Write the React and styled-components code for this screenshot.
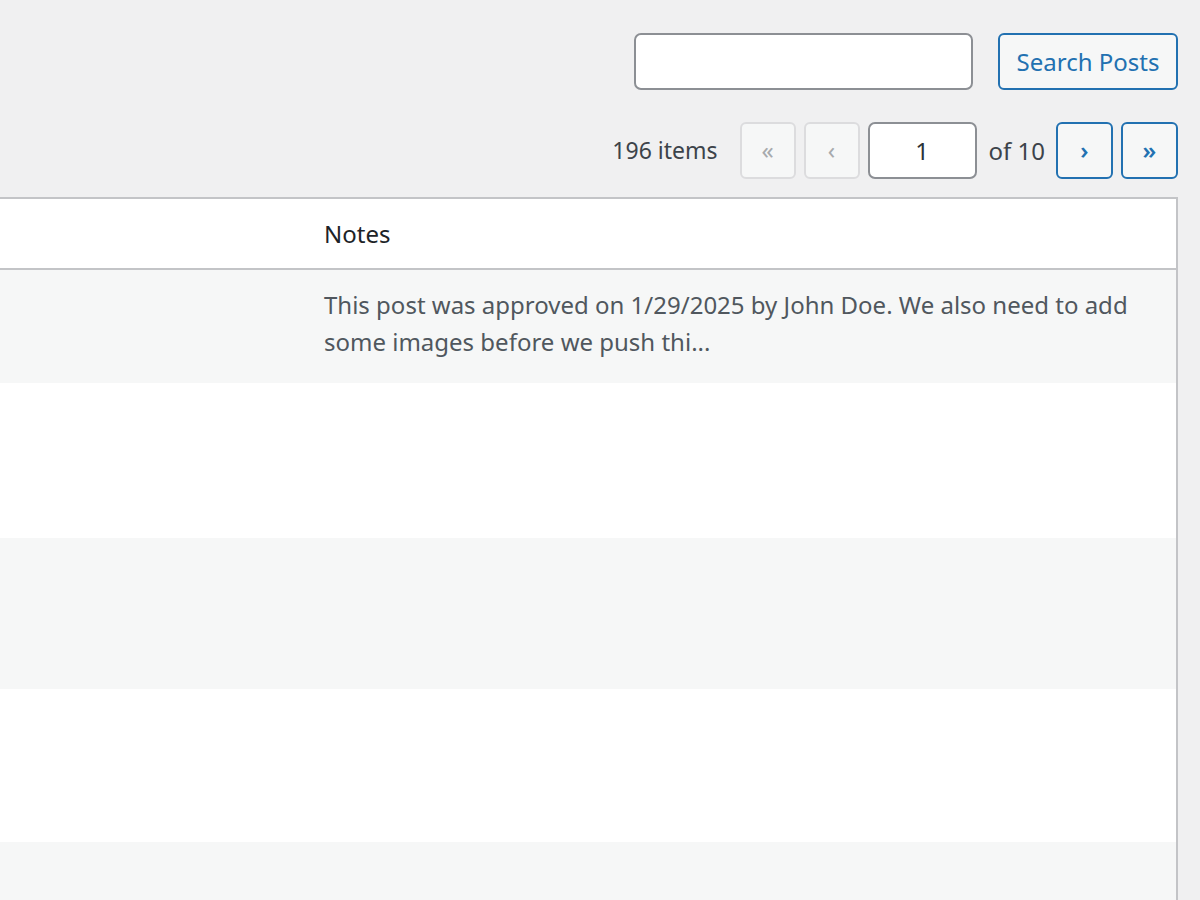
import React from "react";
import styled, { createGlobalStyle } from "styled-components";

const FONT = `"Noto Sans", "Open Sans", "Liberation Sans", sans-serif`;

const Global = createGlobalStyle`
  html, body { margin: 0; padding: 0; }
  body {
    background: #f0f0f1;
    font-family: ${FONT};
    color: #3c434a;
    overflow: hidden;
  }
  * { box-sizing: border-box; }
`;

const Page = styled.div`
  width: 1200px;
  height: 900px;
  padding: 33px 22px 0 0;
  display: flex;
  flex-direction: column;
  overflow: hidden;
`;

const SearchBox = styled.form`
  display: flex;
  justify-content: flex-end;
  align-items: center;
  gap: 25px;
  height: 57px;
`;

const SearchInput = styled.input`
  width: 339px;
  height: 57px;
  border: 2px solid #8c8f94;
  border-radius: 7px;
  background: #fff;
  font: 24px ${FONT};
  padding: 0 14px;
  outline: none;
`;

const Button = styled.button`
  height: 57px;
  width: ${(p) => p.$w || 57}px;
  padding: 0;
  border: 2px solid ${(p) => (p.$disabled ? "#dcdcde" : "#2271b1")};
  border-radius: 6px;
  background: #f6f7f7;
  color: ${(p) => (p.$disabled ? "#a7aaad" : "#2271b1")};
  font: 24px ${FONT};
  font-weight: ${(p) => (p.$bold ? 600 : 400)};
  line-height: 1;
  display: inline-flex;
  align-items: center;
  justify-content: center;
  cursor: ${(p) => (p.$disabled ? "default" : "pointer")};
`;

const TableNav = styled.div`
  display: flex;
  justify-content: flex-end;
  align-items: center;
  margin-top: 32px;
  height: 56px;
`;

const Count = styled.span`
  font-size: 23px;
  color: #3c434a;
  margin-right: 22px;
`;

const Pager = styled.span`
  display: flex;
  align-items: center;
  gap: 8px;
`;

const PageInput = styled.input`
  width: 109px;
  height: 57px;
  border: 2px solid #8c8f94;
  border-radius: 7px;
  background: #fff;
  font: 24px ${FONT};
  color: #2c3338;
  text-align: center;
  outline: none;
`;

const OfText = styled.span`
  font-size: 24px;
  color: #3c434a;
  margin: 0 3px 0 4px;
`;

const TableWrap = styled.div`
  margin-top: 19px;
  margin-left: -40px;
  flex: 1;
`;

const Table = styled.table`
  width: 100%;
  border-collapse: collapse;
  table-layout: fixed;
  background: #fff;
  border: 2px solid #c3c4c7;
  border-bottom: none;
`;

const HeadCell = styled.th`
  height: 71px;
  text-align: left;
  font-weight: 400;
  font-size: 24px;
  color: #1d2327;
  padding: 0 20px 0 19px;
  border-bottom: 2px solid #c3c4c7;
  vertical-align: middle;
`;

const Row = styled.tr`
  background: ${(p) => (p.$striped ? "#f6f7f7" : "#fff")};
`;

const Cell = styled.td`
  height: ${(p) => p.$h}px;
  padding: 16px 20px 16px 19px;
  font-size: 24px;
  line-height: 37px;
  color: #50575e;
  vertical-align: top;
  overflow-wrap: break-word;
`;

const rows = [
  { h: 114, note: "This post was approved on 1/29/2025 by John Doe. We also need to add some images before we push thi..." },
  { h: 155, note: "" },
  { h: 151, note: "" },
  { h: 153, note: "" },
  { h: 153, note: "" },
];

export default function App() {
  return (
    <>
      <Global />
      <Page>
        <SearchBox onSubmit={(e) => e.preventDefault()}>
          <SearchInput type="search" aria-label="Search Posts" />
          <Button $w={180} type="submit">Search Posts</Button>
        </SearchBox>
        <TableNav>
          <Count>196 items</Count>
          <Pager>
            <Button $disabled $w={56} type="button" aria-hidden="true">«</Button>
            <Button $disabled $w={56} type="button" aria-hidden="true">‹</Button>
            <PageInput defaultValue="1" aria-label="Current Page" />
            <OfText>of 10</OfText>
            <Button $bold type="button">›</Button>
            <Button $bold type="button">»</Button>
          </Pager>
        </TableNav>
        <TableWrap>
          <Table>
            <colgroup>
              <col style={{ width: 344 }} />
              <col />
            </colgroup>
            <thead>
              <tr>
                <HeadCell />
                <HeadCell>Notes</HeadCell>
              </tr>
            </thead>
            <tbody>
              {rows.map((r, i) => (
                <Row key={i} $striped={i % 2 === 0}>
                  <Cell $h={r.h} />
                  <Cell $h={r.h}>{r.note}</Cell>
                </Row>
              ))}
            </tbody>
          </Table>
        </TableWrap>
      </Page>
    </>
  );
}
